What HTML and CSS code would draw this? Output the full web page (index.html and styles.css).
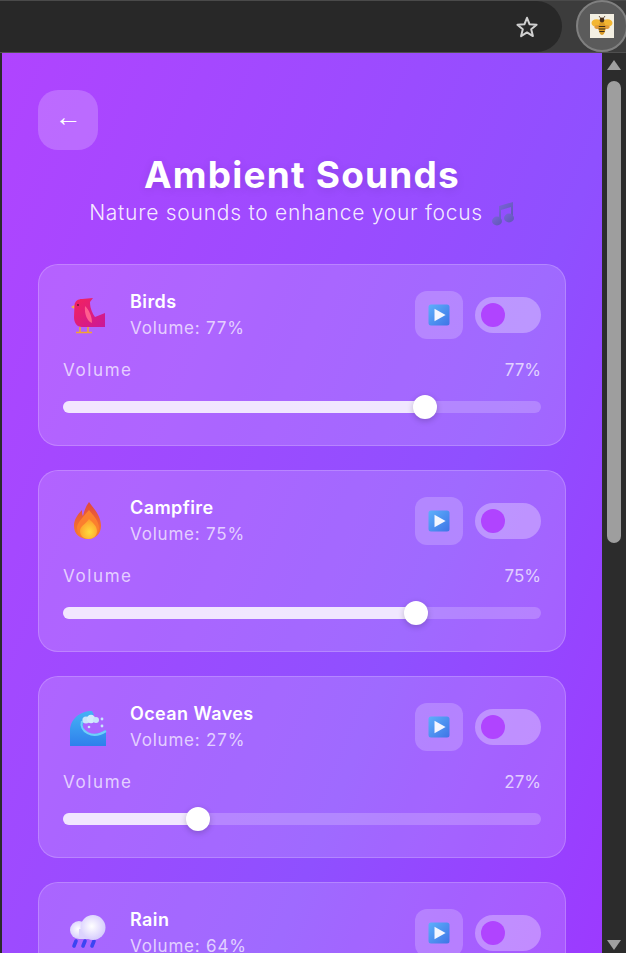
FILE: index.html
```html
<!DOCTYPE html>
<html lang="en">

<head>
    <meta charset="UTF-8">
    <meta name="viewport" content="width=device-width, initial-scale=1.0">
    <title>Ambient Sounds</title>
    <link rel="stylesheet" href="styles.css">
</head>

<body>
    <svg class="defs" width="0" height="0">
        <defs>
            <linearGradient id="playBg" x1="0" y1="0" x2="1" y2="1">
                <stop offset="0" stop-color="#5db0fb" />
                <stop offset="1" stop-color="#3f74e6" />
            </linearGradient>
            <linearGradient id="birdBody" x1="0" y1="0" x2="1" y2="1">
                <stop offset="0" stop-color="#f5235c" />
                <stop offset="1" stop-color="#c9189a" />
            </linearGradient>
            <linearGradient id="flameOuter" x1="0.5" y1="0" x2="0.5" y2="1">
                <stop offset="0" stop-color="#e0483f" />
                <stop offset="1" stop-color="#f97f2c" />
            </linearGradient>
            <radialGradient id="flameInner" cx="0.55" cy="0.65" r="0.6">
                <stop offset="0" stop-color="#ffdc3d" />
                <stop offset="1" stop-color="#fda02c" />
            </radialGradient>
            <linearGradient id="waveBg" x1="0.5" y1="0" x2="0.5" y2="1">
                <stop offset="0" stop-color="#45b3f5" />
                <stop offset="1" stop-color="#2f7fec" />
            </linearGradient>
            <radialGradient id="cloudBg" cx="0.45" cy="0.45" r="0.65">
                <stop offset="0" stop-color="#ffffff" />
                <stop offset="1" stop-color="#cfc3fd" />
            </radialGradient>
            <linearGradient id="noteBg" x1="0" y1="0" x2="1" y2="1">
                <stop offset="0" stop-color="#7a63d8" />
                <stop offset="1" stop-color="#5f57b4" />
            </linearGradient>
            <symbol id="playIcon" viewBox="0 0 22 22">
                <rect x="0.5" y="0.5" width="21" height="21" rx="2.5" fill="url(#playBg)" />
                <path d="M6.5 4.8 L17.6 11 L6.5 17.2 Z" fill="#f4f6ff" />
            </symbol>
        </defs>
    </svg>

    <div class="toolbar">
        <div class="omnibox">
            <svg class="star" width="24" height="24" viewBox="0 0 24 24">
                <path d="M12 2.8 L14.6 9.3 L21.6 9.8 L16.2 14.3 L17.9 21.1 L12 17.4 L6.1 21.1 L7.8 14.3 L2.4 9.8 L9.4 9.3 Z" fill="none" stroke="#d0d0d0" stroke-width="2" stroke-linejoin="round" />
            </svg>
        </div>
        <div class="ext-btn">
            <div class="ext-icon">
                <svg width="24" height="24" viewBox="0 0 24 24">
                    <rect width="24" height="24" fill="#f3efe2" />
                    <ellipse cx="6.5" cy="9" rx="5" ry="3.8" fill="#f2b632" />
                    <ellipse cx="17.5" cy="9" rx="5" ry="3.8" fill="#f2b632" />
                    <ellipse cx="8" cy="13" rx="3.6" ry="2" fill="#e09a3a" />
                    <ellipse cx="16" cy="13" rx="3.6" ry="2" fill="#e09a3a" />
                    <ellipse cx="12" cy="14" rx="3.4" ry="7" fill="#d99a26" />
                    <path d="M8.8 12.5 H15.2 M8.6 15 H15.4 M9.4 17.5 H14.6" stroke="#3c2a18" stroke-width="1.2" />
                    <circle cx="12" cy="6" r="2.4" fill="#4a2f1c" />
                    <path d="M10.5 4 L9 2 M13.5 4 L15 2" stroke="#4a2f1c" stroke-width="0.8" />
                </svg>
            </div>
        </div>
    </div>

    <div class="window">
        <main class="popup">
            <button class="back-btn">←</button>
            <header class="page-head">
                <h1>Ambient Sounds</h1>
                <p>Nature sounds to enhance your focus
                    <svg class="note" width="24" height="26" viewBox="0 0 24 26">
                        <path d="M8 6 L22 2 V18 H20 V7 L10 10 V21 H8 Z" fill="url(#noteBg)" />
                        <ellipse cx="6" cy="21" rx="5" ry="4.4" fill="url(#noteBg)" />
                        <ellipse cx="18" cy="18" rx="5" ry="4.4" fill="url(#noteBg)" />
                    </svg>
                </p>
            </header>

            <div class="sound-list">
                <section class="sound-card">
                    <div class="sound-top">
                        <svg class="sound-icon" width="40" height="40" viewBox="0 0 40 40">
                            <path d="M3 12 L6.5 10 L6.5 14 Z" fill="#f5b13c" />
                            <path d="M6.5 10 C7 6 10 4 14 4 L25 3 L22 7 C22 14 25 19 27 22 L37 18 V32 H14 C9 32 6 28 6 22 Z" fill="url(#birdBody)" />
                            <path d="M17 11 C21 15 24 21 24 28 C20 27 16 20 17 11 Z" fill="#ff5f8e" />
                            <circle cx="10" cy="10" r="0.9" fill="#5a1030" />
                            <path d="M12 32 V37 M20 32 V37 M8 37.5 H24" stroke="#f2a531" stroke-width="1.6" />
                        </svg>
                        <div class="sound-info">
                            <h3>Birds</h3>
                            <span>Volume: 77%</span>
                        </div>
                        <div class="sound-actions">
                            <button class="play-btn"><svg width="22" height="22"><use href="#playIcon" /></svg></button>
                            <div class="toggle"><span class="knob"></span></div>
                        </div>
                    </div>
                    <div class="volume-row"><span>Volume</span><span>77%</span></div>
                    <div class="slider"><div class="slider-fill" style="--v:0.77"><span class="slider-thumb"></span></div></div>
                </section>

                <section class="sound-card">
                    <div class="sound-top">
                        <svg class="sound-icon" width="40" height="40" viewBox="0 0 40 40">
                            <path d="M21 1 C25 7 33 14 33 25 C33 33 27 38 20 38 C12 38 6 33 6 25 C6 19 9 14 14 9 C14 12 14 13 15 15 C16 10 18 5 21 1 Z" fill="url(#flameOuter)" />
                            <path d="M21 9 C25 14 31 20 31 27 C31 33 26 38 20 38 C14 38 9 33 9 27 C9 22 14 17 21 9 Z" fill="#fb7f2e" />
                            <path d="M21 18 C25 22 29 25 29 30 C29 35 25 38 20.5 38 C15 38 12 34 12 30 C12 25 18 23 21 18 Z" fill="url(#flameInner)" />
                        </svg>
                        <div class="sound-info">
                            <h3>Campfire</h3>
                            <span>Volume: 75%</span>
                        </div>
                        <div class="sound-actions">
                            <button class="play-btn"><svg width="22" height="22"><use href="#playIcon" /></svg></button>
                            <div class="toggle"><span class="knob"></span></div>
                        </div>
                    </div>
                    <div class="volume-row"><span>Volume</span><span>75%</span></div>
                    <div class="slider"><div class="slider-fill" style="--v:0.75"><span class="slider-thumb"></span></div></div>
                </section>

                <section class="sound-card">
                    <div class="sound-top">
                        <svg class="sound-icon" width="40" height="40" viewBox="0 0 40 40">
                            <path d="M2 39 V24 C2 12 12 4 24 4 L26 8 C19 10 15 14 15 19 C15 26 24 31 38 23 V39 Z" fill="url(#waveBg)" />
                            <path d="M14 14 C11 24 24 33 38 24" fill="none" stroke="#6fd0fa" stroke-width="2.2" />
                            <circle cx="18" cy="13" r="3.6" fill="#c9e6fb" />
                            <circle cx="23" cy="12" r="4.2" fill="#d5ecfc" />
                            <circle cx="28" cy="13" r="3" fill="#c9e6fb" />
                            <circle cx="34" cy="12" r="1.4" fill="#c9e6fb" />
                            <circle cx="34" cy="19" r="1.4" fill="#c9e6fb" />
                            <circle cx="21" cy="20" r="1.3" fill="#c9e6fb" />
                        </svg>
                        <div class="sound-info">
                            <h3>Ocean Waves</h3>
                            <span>Volume: 27%</span>
                        </div>
                        <div class="sound-actions">
                            <button class="play-btn"><svg width="22" height="22"><use href="#playIcon" /></svg></button>
                            <div class="toggle"><span class="knob"></span></div>
                        </div>
                    </div>
                    <div class="volume-row"><span>Volume</span><span>27%</span></div>
                    <div class="slider"><div class="slider-fill" style="--v:0.27"><span class="slider-thumb"></span></div></div>
                </section>

                <section class="sound-card">
                    <div class="sound-top">
                        <svg class="sound-icon" width="40" height="40" viewBox="0 0 40 40">
                            <path d="M8 28 L6 33 M17 28 L15 33 M26 28 L24 33" stroke="#3b45f2" stroke-width="3.6" stroke-linecap="round" />
                            <circle cx="11" cy="17" r="9" fill="url(#cloudBg)" />
                            <rect x="11" y="16" width="16" height="10" fill="#dcd3fe" />
                            <circle cx="25" cy="14.5" r="12.5" fill="url(#cloudBg)" />
                        </svg>
                        <div class="sound-info">
                            <h3>Rain</h3>
                            <span>Volume: 64%</span>
                        </div>
                        <div class="sound-actions">
                            <button class="play-btn"><svg width="22" height="22"><use href="#playIcon" /></svg></button>
                            <div class="toggle"><span class="knob"></span></div>
                        </div>
                    </div>
                </section>
            </div>
        </main>

        <div class="scrollbar">
            <span class="arrow-up"></span>
            <div class="scroll-track"><div class="scroll-thumb"></div></div>
            <span class="arrow-down"></span>
        </div>
    </div>
</body>

</html>
```

FILE: styles.css
```css
html,
body {
    height: 100%;
}

body {
    font-family: Inter, "Open Sans", sans-serif;
    margin: 0;
    background-color: #2b2b2b;
    color: white;
    overflow: hidden;
}

.defs {
    position: absolute;
}

/* browser chrome */
.toolbar {
    height: 53px;
    display: flex;
    background-color: #3c3c3c;
    box-sizing: border-box;
    border-top: 1px solid #4a4a4a;
    border-bottom: 1px solid #4f4f4f;
}

.omnibox {
    width: 562px;
    background-color: #282828;
    border-radius: 0 26px 26px 0;
    display: flex;
    align-items: center;
    justify-content: flex-end;
    padding-right: 23px;
    box-sizing: border-box;
}

.star {
    display: block;
}

.ext-btn {
    width: 52px;
    height: 52px;
    flex-shrink: 0;
    margin: -1px -40px 0 14px;
    border-radius: 50%;
    border: 2px solid #808080;
    background-color: #5b5b5b;
    box-sizing: border-box;
    display: flex;
    align-items: center;
    justify-content: center;
}

.ext-icon {
    display: flex;
}

.window {
    height: 900px;
    display: flex;
    padding-left: 2px;
}

/* popup */
.popup {
    width: 600px;
    box-sizing: border-box;
    padding: 37px 36px 0;
    overflow: hidden;
    background: linear-gradient(112deg, #b044ff 0%, #8f50ff 66%, #9c3aff 100%);
}

.back-btn {
    display: block;
    width: 60px;
    height: 60px;
    border: none;
    border-radius: 20px;
    background-color: rgba(255, 255, 255, 0.2);
    color: white;
    font-size: 27px;
    line-height: 54px;
    font-family: "Liberation Sans", sans-serif;
    padding: 0 0 6px;
}

.page-head {
    text-align: center;
    margin: 3px 0 35px;
}

.page-head h1 {
    margin: 0;
    font-size: 37px;
    line-height: 44px;
    font-weight: 700;
    letter-spacing: 1.2px;
    text-shadow: 0 2px 10px rgba(0, 0, 0, 0.1);
}

.page-head p {
    margin: 0;
    font-size: 21px;
    line-height: 32px;
    font-weight: 300;
    letter-spacing: 0.75px;
    color: rgba(255, 255, 255, 0.9);
    display: flex;
    justify-content: center;
    align-items: center;
    gap: 8px;
}

.sound-list {
    display: flex;
    flex-direction: column;
    gap: 24px;
}

.sound-card {
    background-color: rgba(255, 255, 255, 0.15);
    border: 1px solid rgba(255, 255, 255, 0.2);
    border-radius: 20px;
    padding: 24px;
    height: 182px;
    box-sizing: border-box;
    flex-shrink: 0;
}

.sound-top {
    display: flex;
    align-items: center;
}

.sound-icon {
    flex-shrink: 0;
    margin: 0 22px 0 5px;
}

.sound-info {
    flex: 1;
}

.sound-info h3 {
    margin: 0;
    font-size: 18px;
    line-height: 26px;
    font-weight: 600;
    letter-spacing: 0.4px;
}

.sound-info span {
    font-size: 17px;
    line-height: 26px;
    letter-spacing: 0.8px;
    display: block;
    color: rgba(255, 255, 255, 0.7);
}

.sound-actions {
    display: flex;
    align-items: center;
    gap: 12px;
}

.play-btn {
    width: 48px;
    height: 48px;
    border: none;
    border-radius: 12px;
    background-color: rgba(255, 255, 255, 0.2);
    display: flex;
    align-items: center;
    justify-content: center;
    padding: 0;
}

.toggle {
    width: 66px;
    height: 36px;
    border-radius: 18px;
    background-color: rgba(255, 255, 255, 0.3);
    display: flex;
    align-items: center;
    padding-left: 6px;
    box-sizing: border-box;
}

.knob {
    width: 24px;
    height: 24px;
    border-radius: 50%;
    background-color: #b044ff;
}

.volume-row {
    display: flex;
    justify-content: space-between;
    font-size: 17px;
    line-height: 24px;
    margin-top: 17px;
    color: rgba(255, 255, 255, 0.7);
}

.volume-row span:first-child {
    letter-spacing: 1.6px;
}

.slider {
    height: 12px;
    margin-top: 19px;
    border-radius: 6px;
    background-color: rgba(255, 255, 255, 0.2);
}

.slider-fill {
    position: relative;
    height: 100%;
    width: calc(12px + (100% - 24px) * var(--v));
    border-radius: 6px;
    background-color: rgba(255, 255, 255, 0.8);
}

.slider-thumb {
    position: absolute;
    top: -6px;
    right: -12px;
    width: 24px;
    height: 24px;
    border-radius: 50%;
    background-color: white;
    box-shadow: 0 2px 6px rgba(0, 0, 0, 0.2);
}

/* fake scrollbar */
.scrollbar {
    width: 24px;
    background-color: #2c2c2c;
    display: flex;
    flex-direction: column;
    align-items: center;
    padding: 7px 0 3px;
    box-sizing: border-box;
}

.arrow-up,
.arrow-down {
    width: 0;
    height: 0;
    border-left: 7px solid transparent;
    border-right: 7px solid transparent;
}

.arrow-up {
    border-bottom: 10px solid #a0a0a0;
}

.arrow-down {
    border-top: 10px solid #a0a0a0;
}

.scroll-track {
    flex: 1;
    width: 14px;
    padding-top: 11px;
}

.scroll-thumb {
    height: 462px;
    border-radius: 7px;
    background-color: #9e9e9e;
}
```
